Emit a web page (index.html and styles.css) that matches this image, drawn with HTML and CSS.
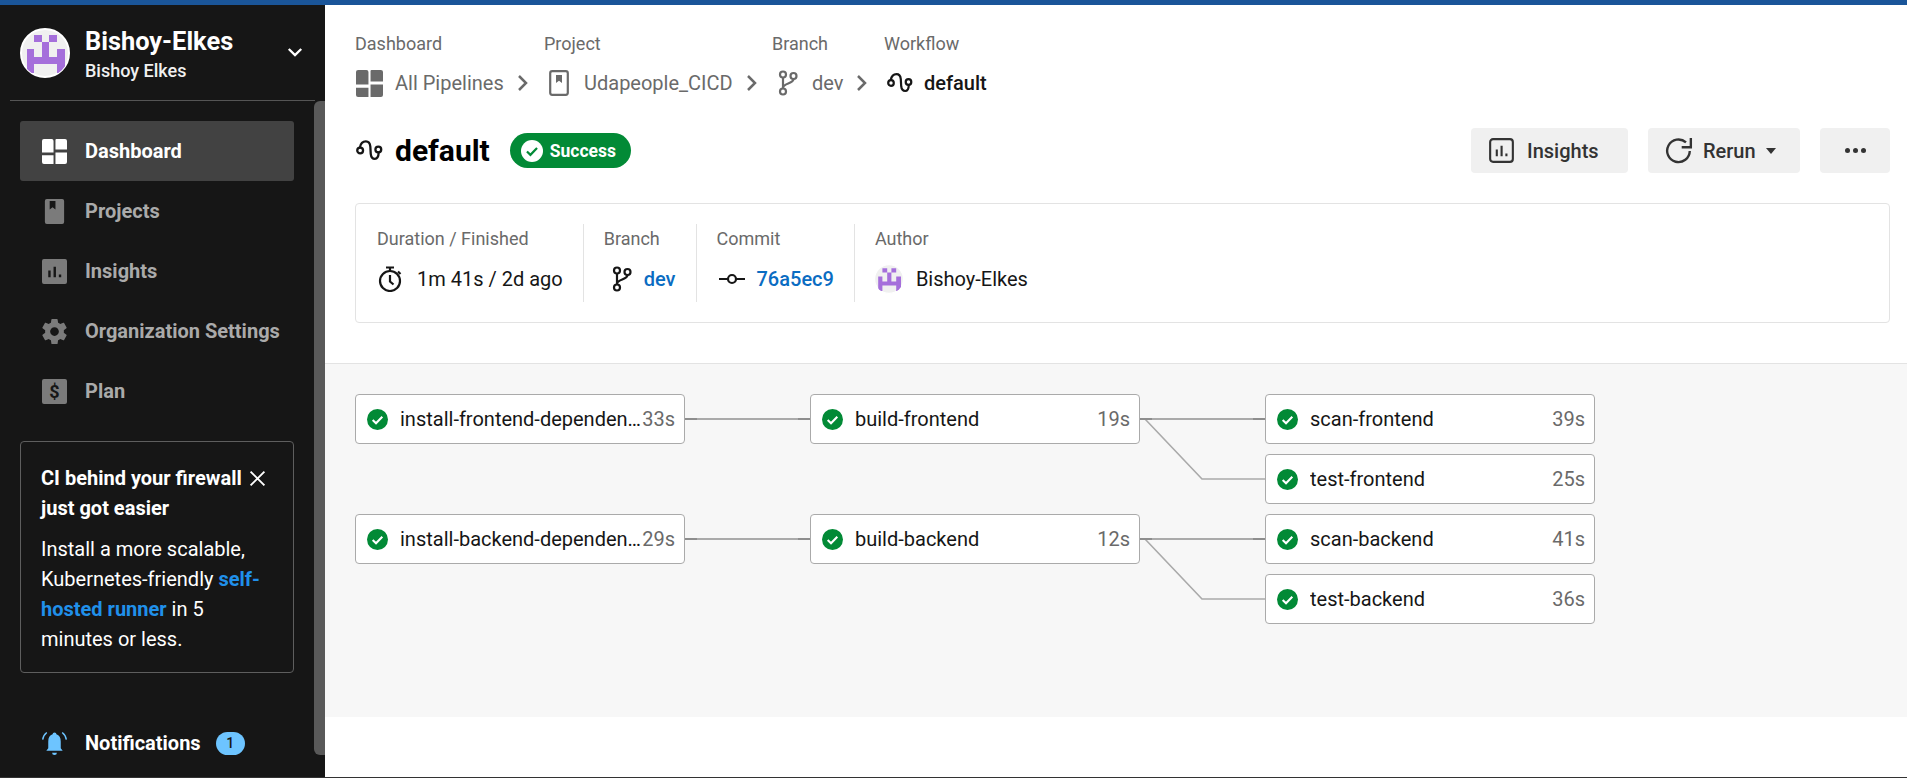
FILE: index.html
```html
<!DOCTYPE html>
<html lang="en">
<head>
<meta charset="utf-8">
<title>default - Workflow</title>
<link rel="stylesheet" href="styles.css">
</head>
<body>
<svg class="defs" width="0" height="0" aria-hidden="true">
  <defs>
    <clipPath id="avatar-clip"><circle cx="25" cy="25" r="24"/></clipPath>
    <symbol id="avatar" viewBox="0 0 50 50">
      <circle cx="25" cy="25" r="24" fill="#f0f0f0" stroke="#fff" stroke-width="2"/>
      <path clip-path="url(#avatar-clip)" fill="#a56fdb" d="M14 7h8v7h-8zM29 7h8v7h-8zM22 14h7v15h-7zM7 21h7v24H7zM37 21h8v24h-8zM14 29h23v7H14z"/>
    </symbol>
    <symbol id="workflow" viewBox="0 0 26 20">
      <circle cx="4" cy="10" r="2.800" fill="none" stroke="currentColor" stroke-width="2.200"/>
      <circle cx="21.500" cy="9" r="2.800" fill="none" stroke="currentColor" stroke-width="2.200"/>
      <path fill="none" stroke="currentColor" stroke-width="2.200" stroke-linecap="round" d="M3.800 7C4.500 3 7 1.200 9.500 1.200c2.500 0 4 2 4.300 5l.4 7c.3 3 2 4.800 4 4.800s3.500-2 3.600-6"/>
    </symbol>
    <symbol id="branch" viewBox="0 0 20 26">
      <g fill="none" stroke="currentColor" stroke-width="2.200">
        <circle cx="5" cy="4.500" r="3"/><circle cx="5" cy="21.500" r="3"/><circle cx="15.500" cy="6" r="3"/>
        <path d="M5 7.500v11M15.500 9c0 5-10.500 4-10.500 9"/>
      </g>
    </symbol>
    <symbol id="check" viewBox="0 0 24 24">
      <circle cx="12" cy="12" r="12" fill="#028a36"/>
      <path d="M6.500 12.500l3.800 3.700 7.200-7.400" fill="none" stroke="#fff" stroke-width="2.400"/>
    </symbol>
    <symbol id="dash" viewBox="0 0 26 26">
      <path fill="currentColor" d="M2 0h8a2 2 0 0 1 2 2v12H0V2a2 2 0 0 1 2-2zM15 0h9a2 2 0 0 1 2 2v9H14V1a1 1 0 0 1 1-1zM0 17h12v9H2a2 2 0 0 1-2-2zM14 14h12v10a2 2 0 0 1-2 2H14z"/>
    </symbol>
    <symbol id="chev" viewBox="0 0 12 18">
      <path d="M2 2l7 7-7 7" fill="none" stroke="currentColor" stroke-width="2.500"/>
    </symbol>
  </defs>
</svg>

<div class="topbar"></div>
<div class="app">
  <aside class="sidebar">
    <header class="org">
      <svg class="org-avatar"><use href="#avatar"/></svg>
      <div class="org-names">
        <div class="org-name">Bishoy-Elkes</div>
        <div class="org-user">Bishoy Elkes</div>
      </div>
      <svg class="org-caret" viewBox="0 0 18 12"><path d="M2 2l7 7 7-7" fill="none" stroke="#fff" stroke-width="2.600"/></svg>
    </header>
    <nav class="nav">
      <a class="nav-item active"><svg class="nav-icon"><use href="#dash"/></svg>Dashboard</a>
      <a class="nav-item">
        <svg class="nav-icon" viewBox="0 0 26 26"><path fill="currentColor" fill-rule="evenodd" d="M5 0h16a2 2 0 0 1 2 2v22a2 2 0 0 1-2 2H5a2 2 0 0 1-2-2V2a2 2 0 0 1 2-2zm3 2v9l3-2.500 3 2.500V2z"/></svg>
        Projects
      </a>
      <a class="nav-item">
        <svg class="nav-icon" viewBox="0 0 26 26"><path fill="currentColor" fill-rule="evenodd" d="M2 0h22a2 2 0 0 1 2 2v22a2 2 0 0 1-2 2H2a2 2 0 0 1-2-2V2a2 2 0 0 1 2-2zm10 8v11h2.500V8zM6.500 12v7H9v-7zm11 4v3H20v-3z"/></svg>
        Insights
      </a>
      <a class="nav-item">
        <svg class="nav-icon gear-icon" viewBox="2 2 20 20"><path fill="currentColor" d="M19.430 12.980c.04-.32.070-.640.070-.980s-.030-.660-.070-.980l2.110-1.650c.190-.150.240-.420.120-.640l-2-3.460c-.120-.220-.390-.300-.610-.220l-2.490 1c-.520-.400-1.080-.730-1.690-.980l-.380-2.650A.488.488 0 0 0 14 2h-4c-.250 0-.460.180-.490.420l-.380 2.650c-.610.250-1.170.590-1.690.980l-2.490-1c-.230-.090-.490 0-.610.220l-2 3.460c-.130.220-.070.490.120.640l2.110 1.650c-.040.320-.070.650-.070.980s.030.660.070.980l-2.110 1.650c-.190.150-.240.420-.120.640l2 3.460c.120.220.390.300.610.220l2.490-1c.520.400 1.080.730 1.690.980l.380 2.650c.030.240.240.420.490.420h4c.250 0 .460-.180.490-.420l.380-2.650c.610-.250 1.170-.590 1.690-.980l2.490 1c.230.090.490 0 .610-.220l2-3.460c.120-.220.070-.490-.120-.640l-2.110-1.650zM12 15.500c-1.930 0-3.500-1.570-3.500-3.500s1.570-3.500 3.500-3.500 3.500 1.570 3.500 3.500-1.570 3.500-3.500 3.500z"/></svg>
        Organization Settings
      </a>
      <a class="nav-item">
        <span class="plan-icon">$</span>
        Plan
      </a>
    </nav>
    <section class="promo">
      <div class="promo-head">
        <h3 class="promo-title">CI behind your firewall just got easier</h3>
        <svg class="promo-close" viewBox="0 0 16 16"><path d="M1.500 1.500l13 13M14.500 1.500l-13 13" stroke="#fff" stroke-width="1.800"/></svg>
      </div>
      <p class="promo-text">Install a more scalable, Kubernetes-friendly <a class="promo-link">self-hosted runner</a> in 5 minutes or less.</p>
    </section>
    <div class="notify">
      <svg class="nav-icon notify-icon" viewBox="0 0 26 26"><path fill="currentColor" d="M13 1.500a2 2 0 0 1 2 2c3 1 4.500 3.500 4.500 7.500v7l2 2.500H4.500l2-2.500v-7c0-4 1.500-6.500 4.500-7.500a2 2 0 0 1 2-2zM10.500 22.500h5a2.500 2.500 0 0 1-5 0z"/><path fill="none" stroke="currentColor" stroke-width="1.500" d="M5 1.500C2.500 3.500 1 6 .7 9M21 1.500c2.500 2 4 4.500 4.300 7.500"/></svg>
      <span class="notify-label">Notifications</span>
      <span class="notify-badge">1</span>
    </div>
    <div class="scroll-thumb"></div>
  </aside>

  <main class="main">
    <div class="main-head">
      <div class="crumbs">
        <div class="crumb crumb-a">
          <div class="crumb-label">Dashboard</div>
          <div class="crumb-value"><svg class="crumb-icon"><use href="#dash"/></svg>All Pipelines<svg class="chev"><use href="#chev"/></svg></div>
        </div>
        <div class="crumb crumb-b">
          <div class="crumb-label">Project</div>
          <div class="crumb-value">
            <svg class="crumb-icon" viewBox="0 0 20 26"><rect x="1.200" y="1.200" width="17.600" height="23.600" rx="2" fill="none" stroke="currentColor" stroke-width="2.200"/><path d="M7 5h6v8l-3-2.300L7 13z" fill="currentColor"/></svg>
            Udapeople_CICD<svg class="chev"><use href="#chev"/></svg>
          </div>
        </div>
        <div class="crumb crumb-c">
          <div class="crumb-label">Branch</div>
          <div class="crumb-value"><svg class="crumb-icon icon-branch"><use href="#branch"/></svg>dev<svg class="chev"><use href="#chev"/></svg></div>
        </div>
        <div class="crumb">
          <div class="crumb-label">Workflow</div>
          <div class="crumb-value crumb-current"><svg class="crumb-icon icon-wf"><use href="#workflow"/></svg>default</div>
        </div>
      </div>

      <div class="title-row">
        <svg class="title-icon"><use href="#workflow"/></svg>
        <h1 class="title">default</h1>
        <span class="status">
          <svg class="status-icon" viewBox="0 0 24 24"><circle cx="12" cy="12" r="12" fill="#fff"/><path d="M6.500 12.500l3.800 3.700 7.200-7.400" fill="none" stroke="#028a36" stroke-width="2.400"/></svg>
          Success
        </span>
        <div class="actions">
          <button class="btn btn-insights">
            <svg class="btn-icon" viewBox="0 0 26 26"><rect x="1.200" y="1.200" width="23.600" height="23.600" rx="3" fill="none" stroke="currentColor" stroke-width="2.200"/><path fill="currentColor" d="M12 8h2.200v11H12zM7 12h2.200v7H7zM17 16h2.200v3H17z"/></svg>
            Insights
          </button>
          <button class="btn btn-rerun">
            <svg class="btn-icon rerun-icon" viewBox="0 0 26 26"><path d="M23 13A10.500 10.500 0 1 1 19.500 5" fill="none" stroke="currentColor" stroke-width="2.200"/><path d="M24 1v8.500h-8.500" fill="none" stroke="currentColor" stroke-width="2.200"/></svg>
            Rerun
            <span class="caret"></span>
          </button>
          <button class="btn btn-more"><i class="dot"></i><i class="dot"></i><i class="dot"></i></button>
        </div>
      </div>

      <div class="details">
        <div class="detail">
          <div class="detail-label">Duration / Finished</div>
          <div class="detail-value">
            <svg class="detail-icon" viewBox="0 0 26 26"><g fill="none" stroke="currentColor" stroke-width="2.200"><circle cx="13" cy="15" r="10"/><path d="M9 1.500h8M13 1.500V5M13 9v6.500l3.500 3"/><path d="M21 5.500l2.500 2.500"/></g></svg>
            1m 41s / 2d ago
          </div>
        </div>
        <div class="detail">
          <div class="detail-label">Branch</div>
          <div class="detail-value"><svg class="detail-icon icon-branch-sm"><use href="#branch"/></svg><a class="link">dev</a></div>
        </div>
        <div class="detail">
          <div class="detail-label">Commit</div>
          <div class="detail-value">
            <svg class="detail-icon icon-commit" viewBox="0 0 26 26"><circle cx="13" cy="13" r="4" fill="none" stroke="currentColor" stroke-width="2.200"/><path d="M0 13h9M17 13h9" stroke="currentColor" stroke-width="2.200"/></svg>
            <a class="link">76a5ec9</a>
          </div>
        </div>
        <div class="detail">
          <div class="detail-label">Author</div>
          <div class="detail-value"><svg class="author-avatar"><use href="#avatar"/></svg>Bishoy-Elkes</div>
        </div>
      </div>
    </div>

    <section class="graph">
      <div class="graph-grid">
        <svg class="wires" viewBox="0 0 1240 230" width="1240" height="230">
          <g fill="none" stroke="#aaa" stroke-width="2">
            <path d="M330 25H455"/>
            <path d="M330 145H455"/>
            <path d="M785 25H910"/>
            <path d="M785 145H910"/>
            <path d="M790 25l57 60H910" stroke-width="1.600"/>
            <path d="M790 145l57 60H910" stroke-width="1.600"/>
          </g>
          <g stroke="#8e8e8e" stroke-width="2">
            <path d="M330 25h12M443 25h12M330 145h12M443 145h12M785 25h12M898 25h12M785 145h12M898 145h12"/>
          </g>
        </svg>
        <div class="job j-a1"><svg class="job-icon"><use href="#check"/></svg><span class="job-name">install-frontend-dependencies</span><span class="job-time">33s</span></div>
        <div class="job j-b1"><svg class="job-icon"><use href="#check"/></svg><span class="job-name">build-frontend</span><span class="job-time">19s</span></div>
        <div class="job j-c1"><svg class="job-icon"><use href="#check"/></svg><span class="job-name">scan-frontend</span><span class="job-time">39s</span></div>
        <div class="job j-c2"><svg class="job-icon"><use href="#check"/></svg><span class="job-name">test-frontend</span><span class="job-time">25s</span></div>
        <div class="job j-a3"><svg class="job-icon"><use href="#check"/></svg><span class="job-name">install-backend-dependencies</span><span class="job-time">29s</span></div>
        <div class="job j-b3"><svg class="job-icon"><use href="#check"/></svg><span class="job-name">build-backend</span><span class="job-time">12s</span></div>
        <div class="job j-c3"><svg class="job-icon"><use href="#check"/></svg><span class="job-name">scan-backend</span><span class="job-time">41s</span></div>
        <div class="job j-c4"><svg class="job-icon"><use href="#check"/></svg><span class="job-name">test-backend</span><span class="job-time">36s</span></div>
      </div>
    </section>
  </main>
</div>
</body>
</html>
```

FILE: styles.css
```css
* { box-sizing: border-box; }
html, body { height: 100%; }
body {
  margin: 0;
  overflow: hidden;
  background: #fff;
  color: #161616;
  font-family: Roboto, "Liberation Sans", sans-serif;
  display: flex;
  flex-direction: column;
}
.defs { position: absolute; }
.topbar { height: 5px; background: #1a5599; flex: none; }
.app { display: flex; flex: 1; min-height: 0; border-bottom: 1px solid #333; }

/* sidebar */
.sidebar {
  position: relative;
  width: 325px;
  flex: none;
  background: #161616;
  color: #fff;
  padding: 0 31px 0 20px;
  display: flex;
  flex-direction: column;
}
.org {
  height: 96px;
  margin: 0 -21px 0 -10px;
  padding: 0 12px 0 10px;
  border-bottom: 1px solid #555;
  display: flex;
  align-items: center;
  gap: 15px;
}
.org-avatar { width: 50px; height: 50px; flex: none; }
.org-names { flex: 1; padding-top: 7px; }
.org-name { font-size: 25.400px; font-weight: 700; line-height: 30px; }
.org-user { font-size: 18px; font-weight: 500; line-height: 30px; color: #f0f0f0; }
.org-caret { width: 16px; height: 11px; flex: none; }
.nav { display: flex; flex-direction: column; margin-top: 20px; }
.nav-item {
  height: 60px;
  display: flex;
  align-items: center;
  gap: 18px;
  padding-left: 22px;
  border-radius: 3px;
  color: #aaa;
  font-size: 20px;
  font-weight: 700;
}
.nav-item.active { background: #424242; color: #fff; }
.nav-icon { width: 25px; height: 25px; flex: none; color: #7b7b7b; }
.active .nav-icon { color: #fff; }
.plan-icon {
  width: 25px;
  height: 25px;
  flex: none;
  border-radius: 2px;
  background: #7b7b7b;
  color: #161616;
  font-size: 18px;
  font-weight: 700;
  line-height: 25px;
  text-align: center;
}
.promo {
  margin-top: 20px;
  height: 232px;
  border: 1px solid #5e5e5e;
  border-radius: 4px;
  padding: 21px 30px 0 20px;
  font-size: 20px;
}
.promo-head { display: flex; align-items: flex-start; margin-right: -3px; }
.promo-title { margin: 0; width: 208px; font-size: 20px; font-weight: 700; line-height: 30px; flex: none; }
.promo-close { width: 17px; height: 17px; flex: none; margin-top: 7px; }
.promo-text { margin: 11px 0 0; line-height: 30px; }
.promo-link { color: #2090ea; font-weight: 700; }
.notify {
  margin-top: 40px;
  height: 60px;
  display: flex;
  align-items: center;
  padding-left: 22px;
  gap: 18px;
}
.notify-icon { color: #6dc4ff; }
.notify-label { font-size: 20px; font-weight: 700; }
.notify-badge {
  width: 29px;
  height: 23px;
  margin-left: -3px;
  border-radius: 12px;
  background: #6dc4ff;
  color: #161616;
  font-size: 14px;
  font-weight: 500;
  line-height: 23px;
  text-align: center;
}
.scroll-thumb {
  position: absolute;
  top: 96px;
  right: 0;
  width: 11px;
  height: 654px;
  border-radius: 6px 0 0 6px;
  background: #595959;
}

/* main */
.main { flex: 1; min-width: 0; display: flex; flex-direction: column; }
.main-head { height: 359px; padding: 24px 17px 0 30px; border-bottom: 1px solid #e3e3e3; flex: none; }
.crumbs { display: flex; }
.crumb-a { width: 189px; }
.crumb-b { width: 228px; }
.crumb-c { width: 112px; }
.crumb-label { font-size: 18px; line-height: 30px; color: #6a6a6a; }
.crumb-value {
  display: flex;
  align-items: center;
  height: 30px;
  margin-top: 9px;
  font-size: 20px;
  color: #6a6a6a;
  white-space: nowrap;
}
.crumb-current { color: #161616; font-weight: 500; }
.crumb-icon { width: 27px; height: 27px; margin-right: 13px; flex: none; color: #6a6a6a; }
.crumb-a .crumb-icon { margin-left: 1px; margin-right: 12px; }
.crumb-c .icon-branch { width: 20px; height: 26px; margin: 0 14px 0 6px; }
.icon-wf { width: 26px; height: 20px; margin: 0 11px 0 3px; color: #161616; }
.crumb-b .crumb-icon { width: 20px; height: 26px; margin: 0 15px 0 5px; }
.chev { width: 12px; height: 18px; margin-left: 13px; color: #6a6a6a; flex: none; }
.title-row { display: flex; align-items: center; height: 45px; margin-top: 30px; }
.title-icon { width: 27px; height: 21px; flex: none; margin: 0 12px 0 1px; }
.title { margin: 0; font-size: 30px; font-weight: 700; line-height: 45px; color: #000; }
.status {
  height: 35px;
  margin-left: 20px;
  padding: 0 15px 0 11px;
  border-radius: 18px;
  background: #028a36;
  color: #fff;
  font-size: 17.500px;
  font-weight: 700;
  display: flex;
  align-items: center;
  gap: 7px;
}
.status-icon { width: 22px; height: 22px; }
.actions { margin-left: auto; display: flex; gap: 20px; }
.btn {
  height: 45px;
  border: 0;
  border-radius: 4px;
  background: #f0f0f0;
  color: #333;
  font: 500 20px Roboto, "Liberation Sans", sans-serif;
  display: flex;
  align-items: center;
  padding: 0;
}
.btn-insights { width: 157px; padding-left: 18px; gap: 13px; }
.btn-rerun { width: 152px; padding-left: 17px; gap: 10px; }
.btn-more { width: 70px; justify-content: center; gap: 3px; }
.btn-icon { width: 25px; height: 25px; flex: none; }
.rerun-icon { width: 28px; height: 28px; }
.caret { width: 0; height: 0; border: 5px solid transparent; border-top: 6px solid #333; border-bottom: 0; margin-left: 0; }
.dot { width: 5px; height: 5px; border-radius: 50%; background: #333; }
.details {
  height: 120px;
  margin-top: 30px;
  padding: 20px 0;
  border: 1px solid #e3e3e3;
  border-radius: 4px;
  display: flex;
}
.detail { padding: 0 20px 0 21px; border-right: 1px solid #e3e3e3; }
.detail + .detail { padding: 0 20px; }
.detail:first-child .detail-value { gap: 14px; }
.detail:last-child { border-right: 0; }
.detail-label { font-size: 18px; line-height: 30px; color: #6a6a6a; }
.detail-value {
  display: flex;
  align-items: center;
  gap: 13px;
  height: 30px;
  margin-top: 10px;
  font-size: 20px;
  color: #161616;
}
.detail-icon { width: 26px; height: 26px; flex: none; color: #161616; }
.icon-branch-sm { width: 20px; height: 26px; margin-left: 8px; margin-right: -1px; }
.icon-commit { margin-left: 2px; margin-right: -1px; }
.link { color: #0a6cc2; font-weight: 500; }
.author-avatar { width: 30px; height: 30px; flex: none; margin-left: -1px; margin-right: -1px; }

/* workflow graph */
.graph { height: 353px; flex: none; background: #f7f7f7; padding: 30px 0 0 30px; }
.graph-grid {
  position: relative;
  display: grid;
  grid-template-columns: repeat(3, 330px);
  grid-template-rows: repeat(4, 50px);
  column-gap: 125px;
  row-gap: 10px;
  width: max-content;
}
.wires { position: absolute; left: 0; top: 0; }
.job {
  position: relative;
  display: flex;
  align-items: center;
  padding: 0 9px 0 11px;
  background: #fff;
  border: 1px solid #aaa;
  border-radius: 4px;
  font-size: 20px;
}
.job-icon { width: 21px; height: 21px; flex: none; margin-right: 12px; }
.job-name { flex: 1; min-width: 0; overflow: hidden; white-space: nowrap; text-overflow: ellipsis; }
.job-time { color: #6a6a6a; flex: none; }
.j-a1 { grid-area: 1 / 1; }
.j-b1 { grid-area: 1 / 2; }
.j-c1 { grid-area: 1 / 3; }
.j-c2 { grid-area: 2 / 3; }
.j-a3 { grid-area: 3 / 1; }
.j-b3 { grid-area: 3 / 2; }
.j-c3 { grid-area: 3 / 3; }
.j-c4 { grid-area: 4 / 3; }
```
